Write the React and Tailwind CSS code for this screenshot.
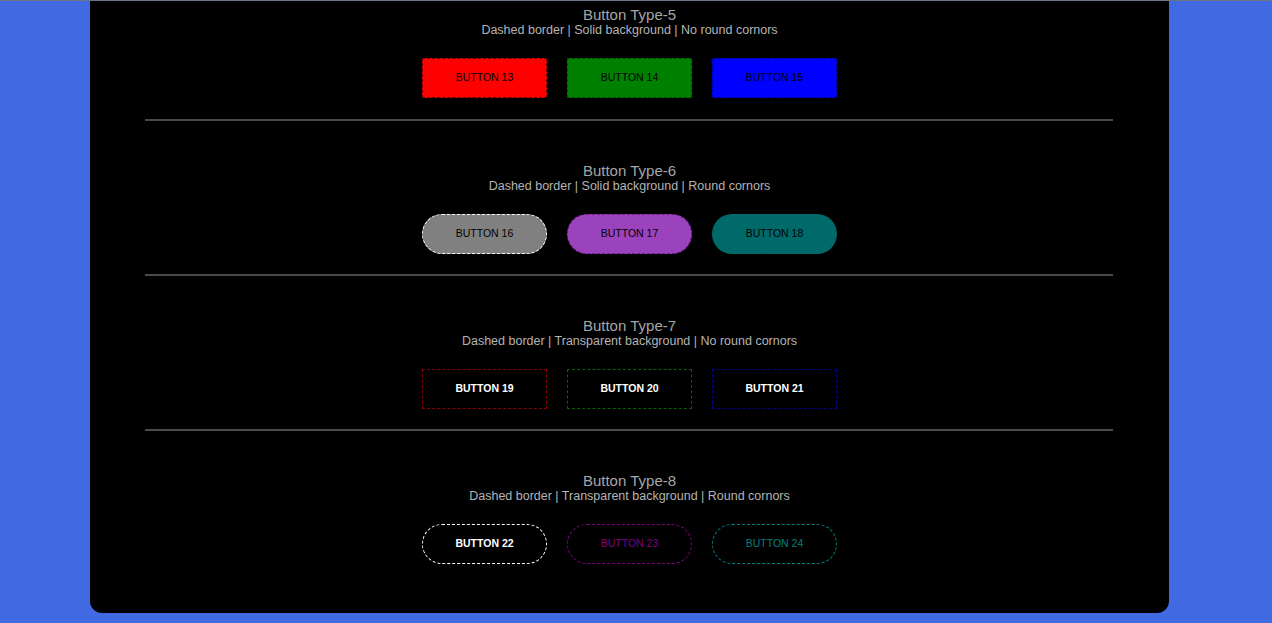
import React from 'react';

const sections = [
  {
    title: 'Button Type-5',
    sub: 'Dashed border | Solid background | No round cornors',
    buttons: [
      { label: 'BUTTON 13', cls: 'bg-[#ff0000] border-black/60 text-black' },
      { label: 'BUTTON 14', cls: 'bg-[#008000] border-black/40 text-black' },
      { label: 'BUTTON 15', cls: 'bg-[#0000ff] border-black/50 text-black' },
    ],
  },
  {
    title: 'Button Type-6',
    sub: 'Dashed border | Solid background | Round cornors',
    buttons: [
      { label: 'BUTTON 16', cls: 'bg-[#808080] border-white text-black rounded-full' },
      { label: 'BUTTON 17', cls: 'bg-[#9b42bd] border-[#6e1f8e] text-black rounded-full' },
      { label: 'BUTTON 18', cls: 'bg-[#006969] border-[#006969] text-black rounded-full' },
    ],
  },
  {
    title: 'Button Type-7',
    sub: 'Dashed border | Transparent background | No round cornors',
    buttons: [
      { label: 'BUTTON 19', cls: 'border-[#8b0000] text-white font-bold' },
      { label: 'BUTTON 20', cls: 'border-[#006400] text-white font-bold' },
      { label: 'BUTTON 21', cls: 'border-[#00008b] text-white font-bold' },
    ],
  },
  {
    title: 'Button Type-8',
    sub: 'Dashed border | Transparent background | Round cornors',
    buttons: [
      { label: 'BUTTON 22', cls: 'border-white text-white font-bold rounded-full' },
      { label: 'BUTTON 23', cls: 'border-[#800080] text-[#800080] rounded-full' },
      { label: 'BUTTON 24', cls: 'border-[#008080] text-[#008080] rounded-full' },
    ],
  },
];

function Section({ title, sub, buttons, first, last }) {
  // first section sits at the top of the scrolled view
  const pad = first ? 'pt-[6px] pb-[21px]' : last ? 'pt-[42px] pb-[49px]' : 'pt-[42px] pb-[20px]';
  return (
    <div className={`flex flex-col items-center ${pad}`}>
      <h3 className="text-[15px] leading-[16px] text-[#a6a6a6]">{title}</h3>
      <p className="text-[12.5px] leading-[14px] text-[#b4b4b4]">{sub}</p>
      <div className="flex gap-[20px] mt-[21px]">
        {buttons.map((b) => (
          <button
            key={b.label}
            className={`w-[125px] h-[40px] border border-dashed text-[10.5px] ${b.cls}`}
          >
            {b.label}
          </button>
        ))}
      </div>
    </div>
  );
}

export default function App() {
  return (
    <div className="min-h-[623px] bg-[#4169e1] font-['Liberation_Sans',Arial,sans-serif]">
      <div className="h-px bg-[#6b7582]" />
      <div className="ml-[90px] w-[1079px] bg-black rounded-b-xl">
        {sections.map((s, i) => (
          <React.Fragment key={s.title}>
            {i > 0 && <div className="ml-[55px] mr-[56px] h-[2px] bg-[#4a4a4a]" />}
            <Section {...s} first={i === 0} last={i === sections.length - 1} />
          </React.Fragment>
        ))}
      </div>
    </div>
  );
}
